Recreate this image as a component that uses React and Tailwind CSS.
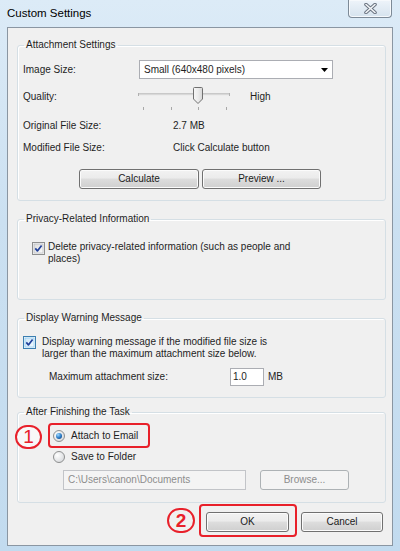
import React from "react";

function Btn({ children, className = "", disabled = false }) {
  return (
    <div
      className={`flex items-center justify-center h-[20px] rounded-[3px] border text-[10px] leading-[12px] ${
        disabled
          ? "border-[#adb2b5] bg-[#f4f4f4] text-[#8d8d8d]"
          : "border-[#707070] bg-[linear-gradient(#f2f2f2_0%,#ebebeb_45%,#dddddd_50%,#cfcfcf_100%)] text-[#1a1a1a] shadow-[inset_0_0_0_1px_#fbfbfb]"
      } ${className}`}
    >
      {children}
    </div>
  );
}

function Group({ title, className = "", children }) {
  return (
    <fieldset className={`border border-[#d5dfe5] rounded-[3px] shadow-[inset_1px_1px_0_#ffffff] ${className}`}>
      <legend className="ml-[6px] px-[2px] leading-[12px] text-[10px]">{title}</legend>
      {children}
    </fieldset>
  );
}

function Checkbox({ strong = false }) {
  return (
    <svg width="13" height="13" viewBox="0 0 13 13" className="shrink-0">
      <defs>
        <linearGradient id={strong ? "cbg2" : "cbg1"} x1="0" y1="0" x2="1" y2="1">
          <stop offset="0" stopColor={strong ? "#cde6f7" : "#dcdcdc"} />
          <stop offset="1" stopColor={strong ? "#f2f9fe" : "#fbfbfb"} />
        </linearGradient>
      </defs>
      <rect x="0.5" y="0.5" width="12" height="12" fill="#f4f4f4" stroke={strong ? "#3c7fb1" : "#8e8f8f"} />
      <rect x="2" y="2" width="9" height="9" fill={`url(#${strong ? "cbg2" : "cbg1"})`} stroke={strong ? "#79c6f9" : "#aeb3b9"} strokeWidth="0.6" />
      <path d="M3.3 6.4 L5.4 8.9 L9.6 3.4" fill="none" stroke="#21409a" strokeWidth="1.7" strokeLinejoin="round" />
    </svg>
  );
}

function Radio({ checked = false }) {
  return (
    <svg width="12" height="12" viewBox="0 0 12 12" className="shrink-0">
      <defs>
        <radialGradient id="rbg" cx="0.35" cy="0.35" r="0.8">
          <stop offset="0" stopColor="#ffffff" />
          <stop offset="1" stopColor="#d3d5d8" />
        </radialGradient>
        <radialGradient id="rdot" cx="0.35" cy="0.3" r="0.8">
          <stop offset="0" stopColor="#9fd8ff" />
          <stop offset="0.6" stopColor="#2f7fc9" />
          <stop offset="1" stopColor="#134a8a" />
        </radialGradient>
      </defs>
      <circle cx="6" cy="6" r="5.5" fill="url(#rbg)" stroke="#8e8f8f" />
      {checked && <circle cx="6" cy="6" r="3" fill="url(#rdot)" />}
    </svg>
  );
}

export default function App() {
  const font = "font-['Liberation_Sans',Arial,sans-serif]";
  return (
    <div
      className={`${font} w-[400px] h-[551px] flex flex-col overflow-hidden text-[10px] leading-[12px] text-[#1e1e1e] bg-[linear-gradient(180deg,#dcebf7_0%,#cbe0f1_40%,#c2dbef_100%)]`}
    >
      {/* Title bar */}
      <div className="h-[27px] flex items-start justify-between shrink-0">
        <div className="pl-[7px] pt-[6px] text-[11.5px] leading-[14px] text-black">Custom Settings</div>
        <div className="mr-[8px] w-[44px] h-[18px] rounded-b-[4px] border border-t-0 border-[#7d8a97] bg-[linear-gradient(#eef4fa,#d6e3ee)] shadow-[inset_0_0_0_1px_#f6f9fc] flex items-center justify-center">
          <svg width="13" height="11" viewBox="0 0 13 11">
            <path d="M2 1.5 L11 9.5 M11 1.5 L2 9.5" stroke="#6a7380" strokeWidth="3.6" strokeLinecap="round" />
            <path d="M2 1.5 L11 9.5 M11 1.5 L2 9.5" stroke="#f4f6f8" strokeWidth="1.6" strokeLinecap="round" />
          </svg>
        </div>
      </div>

      {/* Client area */}
      <div className="mx-[7px] h-[519px] shrink-0 border border-[#8a96a2] bg-[#f0f0f0] pl-[9px] pr-[6px] pt-[11px] flex flex-col">
        {/* Attachment Settings */}
        <Group title="Attachment Settings" className="h-[162px]">
          <div className="pl-[5px] pt-[9px]">
            <div className="flex items-center h-[19px]">
              <span className="w-[116px]">Image Size:</span>
              <div className="w-[194px] h-[19px] border border-[#abadb3] bg-white flex items-center justify-between pl-[4px] pr-[4px]">
                <span>Small (640x480 pixels)</span>
                <svg width="7" height="4" viewBox="0 0 7 4">
                  <path d="M0 0 H7 L3.5 4 Z" fill="#000" />
                </svg>
              </div>
            </div>
            <div className="mt-[4px] flex items-center h-[28px]">
              <span className="w-[115px]">Quality:</span>
              <svg width="93" height="28" viewBox="0 0 93 28" className="shrink-0">
                <line x1="0" y1="11" x2="92" y2="11" stroke="#a0a0a0" strokeWidth="1" />
                <line x1="0" y1="12" x2="92" y2="12" stroke="#e8e8e8" strokeWidth="1" />
                <line x1="0.5" y1="10" x2="0.5" y2="13" stroke="#b0b0b0" />
                <line x1="91.5" y1="10" x2="91.5" y2="13" stroke="#b0b0b0" />
                {[5, 33, 60, 88].map((x) => (
                  <line key={x} x1={x + 0.5} y1="24" x2={x + 0.5} y2="27" stroke="#a8a8a8" />
                ))}
                <defs>
                  <linearGradient id="thumb" x1="0" y1="0" x2="1" y2="0">
                    <stop offset="0" stopColor="#f6f6f6" />
                    <stop offset="0.5" stopColor="#ececec" />
                    <stop offset="1" stopColor="#d6d6d6" />
                  </linearGradient>
                </defs>
                <path d="M55.5 5.5 Q55.5 4.5 56.5 4.5 H63.5 Q64.5 4.5 64.5 5.5 V16 L60 20.5 L55.5 16 Z" fill="url(#thumb)" stroke="#707070" />
              </svg>
              <span className="ml-[19px]">High</span>
            </div>
            <div className="mt-[9px] flex items-center h-[12px]">
              <span className="w-[150px]">Original File Size:</span>
              <span>2.7 MB</span>
            </div>
            <div className="mt-[10px] flex items-center h-[12px]">
              <span className="w-[150px]">Modified File Size:</span>
              <span>Click Calculate button</span>
            </div>
            <div className="mt-[15px] flex gap-[3px] pl-[56px]">
              <Btn className="w-[120px]">Calculate</Btn>
              <Btn className="w-[119px]">Preview ...</Btn>
            </div>
          </div>
        </Group>

        {/* Privacy */}
        <Group title="Privacy-Related Information" className="mt-[12px] h-[87px]">
          <div className="pl-[14px] pt-[16px] flex items-start gap-[3px]">
            <div className="mt-[1px]">
              <Checkbox />
            </div>
            <div className="leading-[12px]">
              Delete privacy-related information (such as people and
              <br />
              places)
            </div>
          </div>
        </Group>

        {/* Warning */}
        <Group title="Display Warning Message" className="mt-[12px] h-[86px]">
          <div className="pl-[5px] pt-[12px]">
            <div className="flex items-start gap-[6px]">
              <Checkbox strong />
              <div className="leading-[12px]">
                Display warning message if the modified file size is
                <br />
                larger than the maximum attachment size below.
              </div>
            </div>
            <div className="mt-[8px] ml-[26px] flex items-center h-[18px]">
              <span className="w-[181px]">Maximum attachment size:</span>
              <div className="w-[34px] h-[18px] border border-[#abadb3] bg-white flex items-center pl-[2px]">1.0</div>
              <span className="ml-[4px]">MB</span>
            </div>
          </div>
        </Group>

        {/* After finishing */}
        <Group title="After Finishing the Task" className="mt-[8px] h-[97px]">
          <div className="relative pt-[5px]">
            <div className="absolute left-[-3px] top-[7px] w-[27px] h-[24px] rounded-full border-2 border-[#e8202a] bg-[#f8f8f8] flex items-center justify-center text-[#e8202a] text-[19px] leading-[20px]">
              1
            </div>
            <div className="ml-[30px] w-[102px] h-[25px] rounded-[4px] border-2 border-[#e8202a] flex items-center pl-[3px] gap-[6px]">
              <Radio checked />
              <span>Attach to Email</span>
            </div>
            <div className="ml-[35px] mt-[3px] h-[12px] flex items-center gap-[6px]">
              <Radio />
              <span>Save to Folder</span>
            </div>
            <div className="mt-[7px] ml-[45px] flex items-center gap-[14px]">
              <div className="w-[183px] h-[20px] border border-[#c2c4c8] bg-[#f4f4f4] text-[#8d8d8d] flex items-center pl-[4px]">
                C:\Users\canon\Documents
              </div>
              <Btn disabled className="w-[89px]">Browse...</Btn>
            </div>
          </div>
        </Group>

        {/* Bottom buttons */}
        <div className="mt-[1px] flex justify-end items-start pr-[3px]">
          <div className="mt-[4px] mr-[4px] w-[28px] h-[25px] rounded-full border-2 border-[#e8202a] flex items-center justify-center text-[#e8202a] text-[19px] leading-[20px] font-bold">
            2
          </div>
          <div className="w-[98px] h-[33px] rounded-[4px] border-2 border-[#e8202a] pl-[5px] pt-[6px]">
            <Btn className="w-[83px]">OK</Btn>
          </div>
          <div className="ml-[4px] mt-[8px]">
            <Btn className="w-[82px]">Cancel</Btn>
          </div>
        </div>
      </div>
    </div>
  );
}
